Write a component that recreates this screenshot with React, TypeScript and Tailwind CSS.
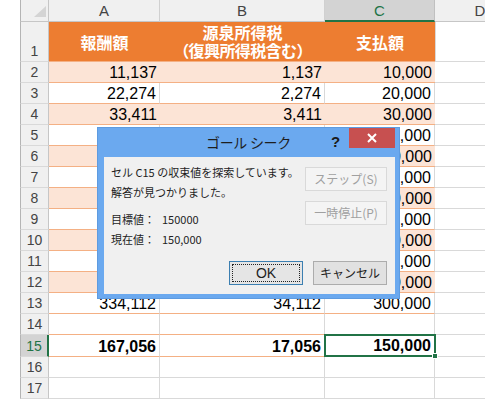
import React from 'react';

type DataRow = { n: number; a: string; b: string; c: string };

const fmt = (v: number) => v.toLocaleString('en-US');

// 支払額 → 源泉所得税 (10.21% gross-up) → 報酬額
const payments = [10000, 20000, 30000, 40000, 50000, 60000, 70000, 80000, 90000, 100000, 110000, 300000];

const dataRows: DataRow[] = payments.map((c, i) => {
  const b = Math.floor((c * 0.1021) / 0.8979);
  return { n: i + 2, a: fmt(c + b), b: fmt(b), c: fmt(c) };
});

// rows 5–12 of columns A and B sit fully behind the dialog
const hidden = (n: number) => n >= 5 && n <= 12;

const num = "font-['Liberation_Sans',Arial,sans-serif]";
const jp = "font-['Noto_Sans_CJK_JP','Noto_Sans',sans-serif]";

function RowHead({ n, active }: { n: number | string; active?: boolean }) {
  return (
    <div
      className={
        'w-[29px] shrink-0 h-full border-l border-l-[#b4b4b4] border-b border-b-[#d9d9d9] flex items-end justify-center text-[14px] leading-[19px] ' +
        num +
        (active
          ? ' bg-[#d3d3d3] text-[#217346] border-r-2 border-r-[#217346]'
          : ' bg-[#f0f0f0] text-[#444] border-r border-r-[#c6c6c6]')
      }
    >
      {n}
    </div>
  );
}

function Gutter() {
  return <div className="w-[20px] shrink-0 h-full bg-white" />;
}

function Cell({
  w,
  text,
  fill,
  bottom,
  bold,
}: {
  w: string;
  text?: string;
  fill?: boolean;
  bottom?: 'orange' | 'gray';
  bold?: boolean;
}) {
  return (
    <div
      className={
        w +
        ' shrink-0 h-full border-b text-right pr-[3px] text-[16px] leading-[19px] flex items-end justify-end text-black ' +
        num +
        (bold ? ' font-bold' : '') +
        (fill ? ' bg-[#fce4d6]' : ' bg-white border-r border-r-[#d9d9d9]') +
        (bottom === 'orange' ? ' border-b-[#f4b084]' : ' border-b-[#d9d9d9]')
      }
    >
      {text}
    </div>
  );
}

function ColD() {
  return <div className="w-[90px] shrink-0 h-full border-r border-b border-[#d9d9d9] bg-white" />;
}

export default function App() {
  return (
    <div className="relative w-[485px] h-[400px] overflow-hidden bg-white">
      {/* column letters */}
      <div className="flex h-[22px]">
        <Gutter />
        <div className="relative w-[29px] shrink-0 h-full bg-[#f0f0f0] border-l border-l-[#b4b4b4] border-r border-r-[#c6c6c6] border-b border-b-[#c6c6c6]">
          <div className="absolute right-[2px] bottom-[4px] w-0 h-0 border-l-[12px] border-l-transparent border-b-[11px] border-b-[#d4d4d4]" />
        </div>
        {[
          ['A', 'w-[111px]'],
          ['B', 'w-[165px]'],
        ].map(([l, w]) => (
          <div
            key={l}
            className={
              w +
              ' shrink-0 h-full bg-[#f0f0f0] border-r border-r-[#d0d0d0] border-b border-b-[#c6c6c6] flex items-end justify-center pb-[1px] text-[15px] leading-[18px] text-[#444] ' +
              num
            }
          >
            {l}
          </div>
        ))}
        <div
          className={
            'w-[110px] shrink-0 h-full bg-[#d3d3d3] border-r border-r-[#c0c0c0] border-b-2 border-b-[#217346] flex items-end justify-center text-[15px] leading-[18px] text-[#217346] ' +
            num
          }
        >
          C
        </div>
        <div
          className={
            'w-[90px] shrink-0 h-full bg-[#f0f0f0] border-b border-b-[#c6c6c6] flex items-end justify-center pb-[1px] text-[15px] leading-[18px] text-[#444] ' +
            num
          }
        >
          D
        </div>
      </div>

      {/* header row 1 */}
      <div className="flex h-[40px]">
        <Gutter />
        <RowHead n={1} />
        <div className={'flex shrink-0 h-full bg-[#ed7d31] border-b border-b-[#f4b084] text-white font-bold text-[16px] ' + jp}>
          <div className="w-[111px] flex items-center justify-center">報酬額</div>
          <div className="w-[165px] flex flex-col items-center justify-center leading-[18px] pb-[2px]">
            <span>源泉所得税</span>
            <span className="tracking-[-0.6px]">（復興所得税含む）</span>
          </div>
          <div className="w-[110px] flex items-center justify-center">支払額</div>
        </div>
        <div className="w-px shrink-0 h-full bg-[#d9d9d9]" />
        <div className="w-[89px] shrink-0 h-full border-b border-[#d9d9d9]" />
      </div>

      {dataRows.map((r) => {
        const fill = r.n % 2 === 0;
        return (
          <div key={r.n} className="flex h-[21px]">
            <Gutter />
            <RowHead n={r.n} />
            <Cell w="w-[111px]" text={hidden(r.n) ? undefined : r.a} fill={fill} bottom="orange" />
            <Cell w="w-[165px]" text={hidden(r.n) ? undefined : r.b} fill={fill} bottom="orange" />
            <Cell w="w-[110px]" text={r.c} fill={fill} bottom="orange" />
            <ColD />
          </div>
        );
      })}

      {/* row 14 */}
      <div className="flex h-[21px]">
        <Gutter />
        <RowHead n={14} />
        <Cell w="w-[111px]" bottom="orange" />
        <Cell w="w-[165px]" bottom="orange" />
        <Cell w="w-[110px]" bottom="orange" />
        <ColD />
      </div>

      {/* row 15 totals */}
      <div className="flex h-[22px]">
        <Gutter />
        <RowHead n={15} active />
        <Cell w="w-[111px]" text="167,056" bottom="orange" bold />
        <Cell w="w-[165px]" text="17,056" bottom="orange" bold />
        <div className="relative w-[110px] shrink-0 h-full">
          <div
            className={
              'absolute -left-[1px] -top-[1px] w-[112px] h-[23px] border-2 border-[#217346] flex items-end justify-end pr-[3px] text-[16px] leading-[19px] font-bold text-black ' +
              num
            }
          >
            150,000
          </div>
          <div className="absolute -right-[3px] -bottom-[2px] w-[6px] h-[6px] bg-[#217346] border border-white" />
        </div>
        <ColD />
      </div>

      {[16, 17].map((n) => (
        <div key={n} className="flex h-[21px]">
          <Gutter />
          <RowHead n={n} />
          <Cell w="w-[111px]" />
          <Cell w="w-[165px]" />
          <Cell w="w-[110px]" />
          <ColD />
        </div>
      ))}

      {/* Goal Seek dialog */}
      <div className={'absolute left-[97px] top-[127px] w-[303px] h-[172px] bg-[#6ba9ef] border border-[#5e9be0] flex flex-col ' + jp}>
        <div className="relative h-[29px] shrink-0 flex items-center justify-center text-[14px] text-[#1e1e1e] tracking-[-0.3px]">
          ゴール シーク
          <span className={'absolute left-[233px] top-[3px] text-[15px] font-bold text-[#1a1a1a] ' + num}>?</span>
          <div className="absolute right-[4px] top-0 w-[46px] h-[20px] bg-[#c75050] flex items-center justify-center">
            <svg width="10" height="10" viewBox="0 0 10 10">
              <path d="M1 1 L9 9 M9 1 L1 9" stroke="white" strokeWidth="2" />
            </svg>
          </div>
        </div>
        <div className="ml-[6px] mr-[4px] mb-[4px] flex-1 bg-[#f0f0f0] flex flex-col px-[7px] pt-[5px] pb-[9px] text-[11px] text-[#1e1e1e]">
          <div className="flex justify-between items-start">
            <div className="leading-[20px]">
              <div>セル C15 の収束値を探索しています。</div>
              <div>解答が見つかりました。</div>
              <div className="mt-[7px] flex">
                <span className="w-[51px]">目標値：</span>
                <span>150000</span>
              </div>
              <div className="flex">
                <span className="w-[51px]">現在値：</span>
                <span>150,000</span>
              </div>
            </div>
            <div className="flex flex-col gap-[10px] mt-[5px] mr-[1px] text-[12px]">
              <div className="w-[82px] h-[24px] border border-[#d9d9d9] bg-[#f4f4f4] text-[#a0a0a0] flex items-center justify-center">
                ステップ(S)
              </div>
              <div className="w-[82px] h-[24px] border border-[#d9d9d9] bg-[#f4f4f4] text-[#a0a0a0] flex items-center justify-center">
                一時停止(P)
              </div>
            </div>
          </div>
          <div className="mt-auto flex justify-end gap-[10px] mr-[1px] text-[12px]">
            <div className="w-[74px] h-[24px] border border-[#3c7fb1] bg-[#e5e5e5] p-[2px]">
              <div className={'w-full h-full border border-dotted border-[#222] flex items-center justify-center text-[14px] ' + num}>OK</div>
            </div>
            <div className="w-[74px] h-[24px] border border-[#acacac] bg-[#e1e1e1] flex items-center justify-center">
              キャンセル
            </div>
          </div>
        </div>
      </div>
    </div>
  );
}
